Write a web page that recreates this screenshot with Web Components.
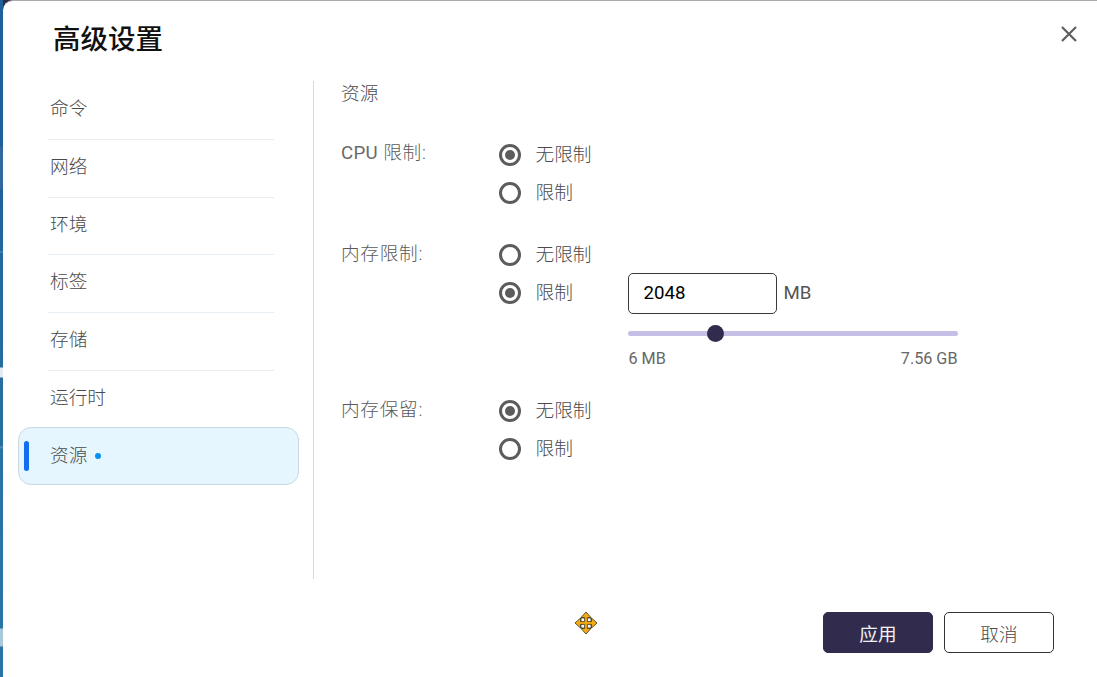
<!DOCTYPE html>
<html lang="zh-CN"><head><meta charset="utf-8">
<style>
html,body{margin:0;height:100%;overflow:hidden}
body{font-family:Roboto,"Noto Sans CJK SC",sans-serif;color:#555;background:#2e2b4b}
</style></head><body>
<adv-dialog></adv-dialog>
<template id="t-dialog">
<style>
:host{display:flex;width:1097px;height:677px;position:relative;overflow:hidden;background:#2e2b4b}
.strip{width:3px;flex:none;background:linear-gradient(#1f5f9c 0,#1f5f9c 146px,#33689f 147px,#33689f 189px,#1f619c 190px,#22689f 251px,#5f93b8 252px,#22699f 253px,#256d9f 367px,#e4ecf2 368px,#e4ecf2 377px,#256e9f 378px,#26709f 446px,#5e93b5 447px,#2873a3 449px,#2975a6 628px,#a9c8da 629px,#a9c8da 646px,#2975a6 647px,#2975a6 677px)}
.dlg{flex:1;display:flex;flex-direction:column;background:#fff;border-top:1px solid #aaa;border-top-left-radius:10px;min-width:0;box-sizing:border-box}
.head{height:80px;flex:none;display:flex;justify-content:space-between;box-sizing:border-box;padding:0 19px 0 50px}
h1{margin:21px 0 0;font-size:27.5px;line-height:36px;font-weight:500;color:#111}
.x{margin-top:24px;width:18px;height:18px;display:block}
.body{flex:1;display:flex;min-height:0}
.nav{width:310px;flex:none;box-sizing:border-box;padding:1px 0 0 15px}
.content{flex:1;border-left:1px solid #d3dbe3;padding-left:27px;min-width:0}
.foot{height:98px;flex:none;display:flex;justify-content:flex-end;gap:11px;box-sizing:border-box;padding:33px 43px 0 0}
.sec{font-size:18.67px;line-height:24px;padding-top:1px;margin-bottom:30px;color:#4a4a4a;font-weight:300}
.lat{font-weight:400;color:#6a6a6a;letter-spacing:.3px}
.up{display:block;margin-top:-1px}
cursor-mark{position:absolute;left:574px;top:611px}
</style>
<div class="strip"></div>
<div class="dlg">
 <div class="head"><h1>高级设置</h1>
  <svg class="x" viewBox="0 0 18 18"><path d="M2 2 16 16M16 2 2 16" stroke="#5f5f5f" stroke-width="2.2" fill="none"/></svg></div>
 <div class="body">
  <div class="nav">
   <nav-item>命令</nav-item><nav-item>网络</nav-item><nav-item>环境</nav-item><nav-item>标签</nav-item><nav-item>存储</nav-item><nav-item last>运行时</nav-item><nav-item active>资源</nav-item>
  </div>
  <div class="content">
   <div class="sec">资源</div>
   <form-group><span slot="label" class="up"><span class="lat">CPU</span> 限制:</span><radio-row checked>无限制</radio-row><radio-row>限制</radio-row></form-group>
   <form-group><span slot="label">内存限制:</span><radio-row>无限制</radio-row>
     <radio-row checked>限制<mem-field slot="extra"></mem-field></radio-row></form-group>
   <form-group><span slot="label">内存保留:</span><radio-row checked>无限制</radio-row><radio-row>限制</radio-row></form-group>
  </div>
 </div>
 <div class="foot"><dlg-button primary>应用</dlg-button><dlg-button>取消</dlg-button></div>
</div>
<cursor-mark></cursor-mark>
</template>
<template id="t-nav">
<style>
:host{display:flex;align-items:flex-start;height:57.8px;box-sizing:border-box;position:relative;font-size:18.67px;line-height:24px;color:#4a4a4a;font-weight:300}
.i{flex:1;box-sizing:border-box;display:flex;align-items:center;padding-left:32px;margin-top:-2px;height:58px}
:host(:not([last]):not([active])) .i::after{content:"";position:absolute;left:30px;width:226px;bottom:0;height:1px;background:#e6eef4}
:host([active]) .i{flex:none;background:#e5f6fe;border:1px solid #c9d8e3;border-radius:13px;width:281px;padding-left:31px}
:host([active]) .bar{position:absolute;left:6px;top:12px;width:5px;height:30px;border-radius:3px;background:#1270ee}
:host([active]) .dot{width:6px;height:6px;border-radius:50%;background:#0092ef;margin-left:8px}
</style><div class="i"><span class="bar"></span><slot></slot><span class="dot"></span></div>
</template>
<template id="t-group">
<style>
:host{display:grid;grid-template-columns:158px 1fr;margin-bottom:24px;font-size:16px}
.l{font-size:18.67px;line-height:24px;padding-top:6px;color:#5a5a5a;font-weight:300;letter-spacing:.7px}
</style><div class="l"><slot name="label"></slot></div><div><slot></slot></div>
</template>
<template id="t-radio">
<style>
:host{display:flex;align-items:flex-start;font-size:18.67px;line-height:38px;color:#4a4a4a;font-weight:300}
.r{width:22px;height:22px;box-sizing:border-box;border:3px solid #5c5c5c;border-radius:50%;margin:8px 15px 0 0;flex:none;display:flex;align-items:center;justify-content:center}
:host([checked]) .r::after{content:"";width:10px;height:10px;border-radius:50%;background:#5c5c5c}
.t{width:92px;flex:none;margin-left:-.5px}
</style><span class="r"></span><span class="t"><slot></slot></span><slot name="extra"></slot>
</template>
<template id="t-mem">
<style>
:host{display:block;width:330px;margin-top:-1px;color:#555;font-weight:400}
.top{display:flex;align-items:center;gap:7px;font-size:18.67px;line-height:38px}
.in{width:149px;height:41px;box-sizing:border-box;border:1px solid #3a3a3a;border-radius:5px;padding-left:15px;line-height:39px;font-size:18.67px;color:#000}
.u{margin-top:-2px}
.tr{height:5px;background:#c6bfe5;border-radius:3px;margin-top:17px;position:relative}
.th{position:absolute;left:79px;top:-6px;width:17px;height:17px;border-radius:50%;background:#312c4d}
.lb{display:flex;justify-content:space-between;font-size:16.2px;line-height:19px;margin-top:13px;padding-left:1px;color:#666}
</style><div class="top"><div class="in">2048</div><span class="u">MB</span></div><div class="tr"><div class="th"></div></div><div class="lb"><span>6 MB</span><span>7.56 GB</span></div>
</template>
<template id="t-btn">
<style>
:host{display:flex;width:110px;height:41px;box-sizing:border-box;border:1px solid #333;border-radius:5px;align-items:center;justify-content:center;font-size:18.67px;color:#4a4a4a;background:#fff;font-weight:300}
:host([primary]){background:#312c4d;border-color:#312c4d;color:#f1f1f4;font-weight:400}
</style><slot></slot>
</template>
<template id="t-cursor">
<style>:host{display:block;width:24px;height:24px}svg{display:block}</style>
<svg width="24" height="24" viewBox="0 0 24 24"><path d="M7 7h10v10H7z" fill="#fff" stroke="#3a3320" stroke-width=".8"/><path d="M12 1 17 6.500H13.400V10.600H17.500V7L23 12 17.500 17V13.400H13.400V17.500H17L12 23 7 17.500H10.600V13.400H6.500V17L1 12 6.500 7V10.600H10.600V6.500H7Z" fill="#f5ab10" stroke="#3a3320" stroke-width=".8" stroke-linejoin="round"/></svg>
</template>
<script>
function def(name,tid){customElements.define(name,class extends HTMLElement{constructor(){super();this.attachShadow({mode:"open"}).appendChild(document.getElementById(tid).content.cloneNode(true));}})}
def("adv-dialog","t-dialog");
def("nav-item","t-nav");
def("form-group","t-group");
def("radio-row","t-radio");
def("mem-field","t-mem");
def("dlg-button","t-btn");
def("cursor-mark","t-cursor");
</script>
</body></html>
